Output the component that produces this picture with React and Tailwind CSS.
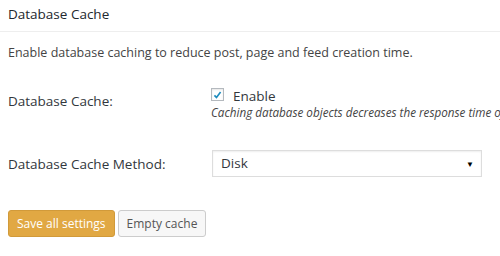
import React from 'react';

const App = () => {
  return (
    <div className="w-[500px] h-[256px] bg-white text-[#32373c] font-['Open_Sans',sans-serif] overflow-hidden">
      <div className="h-[32px] border-b border-[#eeeeee] px-2 pb-[2px] flex items-center">
        <h3 className="text-[13.5px] leading-none text-[#23282d]">Database Cache</h3>
      </div>
      <div className="px-2">
        <p className="text-[12.5px] leading-[18px] text-[#444] mt-[12px]">Enable database caching to reduce post, page and feed creation time.</p>

        <div className="flex mt-[25px]">
          <div className="w-[203px] pt-[4px] text-[13.5px] leading-[20px]">Database Cache:</div>
          <div className="flex-1 min-w-0">
            <label className="flex items-start gap-[9px] text-[13.5px] leading-[18px]">
              <span className="mt-[1px] w-[13px] h-[13px] border border-[#b4b9be] bg-white flex items-center justify-center shadow-[inset_0_1px_2px_rgba(0,0,0,0.1)]">
                <svg viewBox="0 0 16 16" className="w-[12px] h-[12px]">
                  <path d="M3.5 8.5 L6.5 11.5 L12.5 3.5" fill="none" stroke="#1e8cbe" strokeWidth="2.4" />
                </svg>
              </span>
              Enable
            </label>
            <p className="text-[11.7px] leading-[16px] italic text-[#444] whitespace-nowrap mt-[-1px]">Caching database objects decreases the response time of your site.</p>
          </div>
        </div>

        <div className="flex items-center mt-[30px]">
          <div className="w-[204px] text-[13.5px] leading-[20px]">Database Cache Method:</div>
          <div className="w-[270px] h-[27px] border border-[#dddddd] bg-white flex items-center justify-between pl-[8px] pr-[7px] text-[13.5px] shadow-[inset_0_1px_2px_rgba(0,0,0,0.07)]">
            <span>Disk</span>
            <span className="text-[8px] text-black">▼</span>
          </div>
        </div>

        <div className="flex gap-[3px] mt-[33px]">
          <button className="h-[27px] px-[8px] rounded-[3px] bg-[#e1a843] border border-[#d19a3a] text-white text-[12px] leading-none">Save all settings</button>
          <button className="h-[27px] px-[8px] rounded-[3px] bg-[#f7f7f7] border border-[#cccccc] text-[#555] text-[12px] leading-none">Empty cache</button>
        </div>
      </div>
    </div>
  );
};

export default App;
